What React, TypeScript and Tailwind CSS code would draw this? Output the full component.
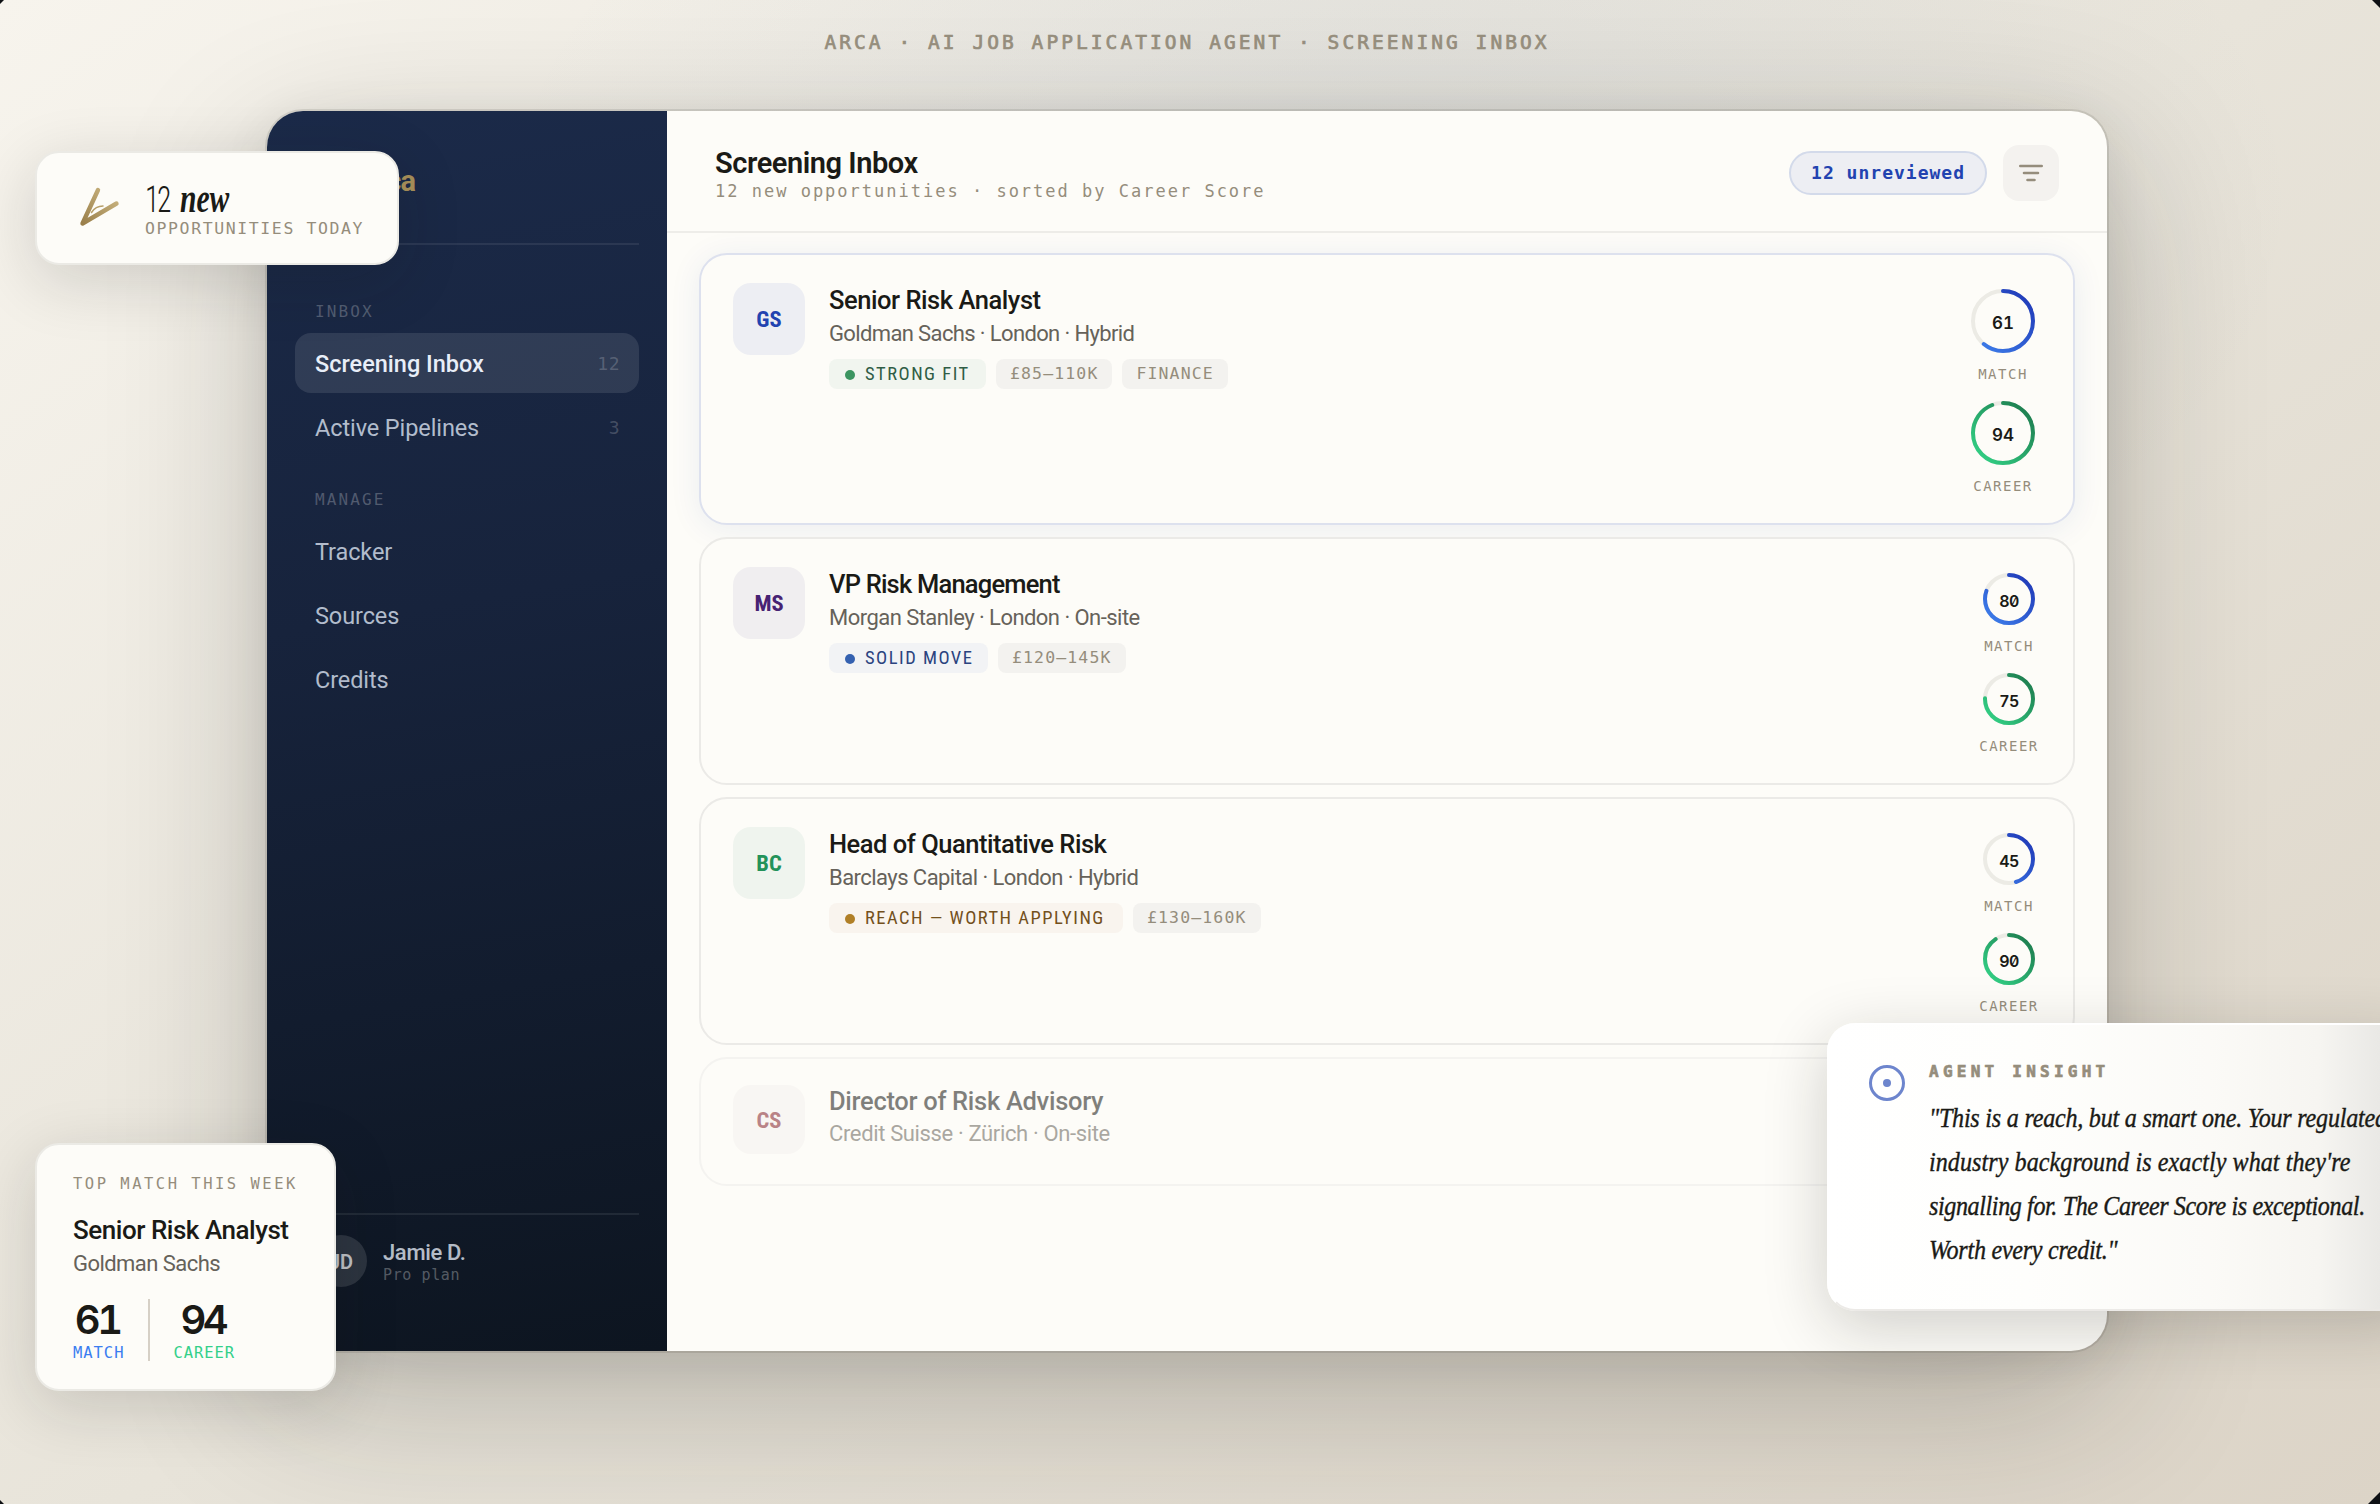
import React from 'react';

interface Job {
  initials: string;
  title: string;
  meta: string;
  fit?: string;
  tags: string[];
  match?: number;
  career?: number;
  large?: boolean;
  titleClass: string;
  metaClass: string;
  cardClass: string;
  avatarClass: string;
  fitClass: string;
  dotClass: string;
}

const MONO = "font-['DejaVu_Sans_Mono',monospace]";

const jobs: Job[] = [
  {
    initials: 'GS',
    title: 'Senior Risk Analyst',
    meta: 'Goldman Sachs · London · Hybrid',
    fit: 'STRONG FIT',
    tags: ['£85–110K', 'FINANCE'],
    match: 61,
    career: 94,
    large: true,
    titleClass: 'leading-[34px] tracking-[-0.45px]',
    metaClass: 'tracking-[-0.63px]',
    cardClass: 'h-[272px] border-[#dde1ee] pt-[28px] shadow-[0_4px_32px_rgba(30,60,150,0.08)]',
    avatarClass: 'h-[72px] bg-[#edeef3] text-[#2243b0]',
    fitClass: 'w-[157px] bg-[#f1f5ef] text-[#2f5d45]',
    dotClass: 'bg-[#3b9560]',
  },
  {
    initials: 'MS',
    title: 'VP Risk Management',
    meta: 'Morgan Stanley · London · On-site',
    fit: 'SOLID MOVE',
    tags: ['£120–145K'],
    match: 80,
    career: 75,
    titleClass: 'leading-[34px] tracking-[-0.8px]',
    metaClass: 'tracking-[-0.54px]',
    cardClass: 'h-[248px] border-[#ebeae7] pt-[28px]',
    avatarClass: 'h-[72px] bg-[#f0eef0] text-[#472273]',
    fitClass: 'w-[159px] bg-[#f2f3f5] text-[#2b437f]',
    dotClass: 'bg-[#3561b0]',
  },
  {
    initials: 'BC',
    title: 'Head of Quantitative Risk',
    meta: 'Barclays Capital · London · Hybrid',
    fit: 'REACH — WORTH APPLYING',
    tags: ['£130–160K'],
    match: 45,
    career: 90,
    titleClass: 'leading-[34px] tracking-[-0.48px]',
    metaClass: 'tracking-[-0.55px]',
    cardClass: 'h-[248px] border-[#ebeae7] pt-[28px]',
    avatarClass: 'h-[72px] bg-[#eff4ee] text-[#239259]',
    fitClass: 'w-[294px] bg-[#f9f4ee] text-[#73501c]',
    dotClass: 'bg-[#b07f27]',
  },
  {
    initials: 'CS',
    title: 'Director of Risk Advisory',
    meta: 'Credit Suisse · Zürich · On-site',
    tags: [],
    titleClass: 'leading-[32px] tracking-[-0.3px] opacity-55',
    metaClass: 'tracking-[-0.36px] opacity-55',
    cardClass: 'h-[129px] border-[#f4f3f0] pt-[26px]',
    avatarClass: 'h-[69px] bg-[#f8f6f3] text-[#b98386]',
    fitClass: '',
    dotClass: '',
  },
];

const ScoreRing: React.FC<{ value: number; label: string; kind: 'match' | 'career'; large?: boolean }> = ({
  value,
  label,
  kind,
  large,
}) => {
  const size = large ? 76 : 64;
  const r = large ? 30 : 24;
  const c = size / 2;
  const len = 2 * Math.PI * r;
  const id = `${kind}-${value}`;
  return (
    <div className="flex flex-col items-center">
      <svg width={size} height={size} viewBox={`0 0 ${size} ${size}`} className="block">
        <defs>
          <linearGradient id={id} x1="0" y1="0" x2="1" y2="1">
            <stop offset="0" stopColor={kind === 'match' ? '#3f82ee' : '#34d88a'} />
            <stop offset="1" stopColor={kind === 'match' ? '#1e35b4' : '#1c754a'} />
          </linearGradient>
        </defs>
        <circle cx={c} cy={c} r={r} fill="none" stroke="#ecebe5" strokeWidth="4" />
        <circle
          cx={c}
          cy={c}
          r={r}
          fill="none"
          stroke={`url(#${id})`}
          strokeWidth="4"
          strokeLinecap="round"
          strokeDasharray={`${(len * value) / 100} ${len}`}
          transform={`rotate(-90 ${c} ${c})`}
        />
        <text
          x={c}
          y={large ? c + 8 : c + 7.8}
          textAnchor="middle"
          fill="#1a1a16"
          className={`font-['Inter',sans-serif] font-semibold [font-feature-settings:'zero','tnum'] ${
            large ? 'text-[17px]' : 'text-[16px] tracking-[-0.5px]'
          }`}
        >
          {value}
        </text>
      </svg>
      <span className={`${MONO} mt-[7px] h-[17px] text-[14px] leading-[17px] tracking-[1.5px] text-[#958d7c]`}>{label}</span>
    </div>
  );
};

const JobCard: React.FC<{ job: Job }> = ({ job }) => (
  <div className={`flex shrink-0 items-start rounded-[28px] border-2 bg-[#fdfcf8] pr-[32px] pl-[32px] ${job.cardClass}`}>
    <div
      className={`flex w-[72px] shrink-0 items-center justify-center rounded-[18px] pt-[2px] text-[22.5px] font-bold [font-stretch:85%] ${job.avatarClass}`}
    >
      {job.initials}
    </div>
    <div className="ml-[24px] flex-1">
      <h3 className={`text-[25.5px] font-medium text-[#1a1a16] [font-stretch:90%] ${job.titleClass}`}>{job.title}</h3>
      <p className={`mt-px text-[22px] leading-[32px] font-[370] text-[#66625a] [font-stretch:90%] ${job.metaClass}`}>
        {job.meta}
      </p>
      {job.fit && (
        <div className="mt-[9px] flex gap-[10px]">
          <span
            className={`flex h-[30px] items-center rounded-[8px] pt-px pl-[16px] text-[18.5px] tracking-[1.5px] whitespace-nowrap [font-stretch:82%] ${job.fitClass}`}
          >
            <span className={`mr-[10px] h-[10px] w-[10px] rounded-full ${job.dotClass}`} />
            {job.fit}
          </span>
          {job.tags.map((tag) => (
            <span
              key={tag}
              className={`${MONO} h-[30px] rounded-[8px] bg-[#f3f2ef] px-[14px] text-[16.5px] leading-[29px] tracking-[1.12px] text-[#958d7c]`}
            >
              {tag}
            </span>
          ))}
        </div>
      )}
    </div>
    {job.match !== undefined && job.career !== undefined && (
      <div className="flex flex-col items-end gap-[12px]">
        <ScoreRing value={job.match} label="MATCH" kind="match" large={job.large} />
        <ScoreRing value={job.career} label="CAREER" kind="career" large={job.large} />
      </div>
    )}
  </div>
);

const NavItem: React.FC<{ label: string; count?: number; active?: boolean }> = ({ label, count, active }) => (
  <div
    className={`mb-1 flex h-[60px] items-center justify-between rounded-[16px] px-[20px] text-[23.5px] [font-stretch:90%] ${
      active ? 'bg-white/10 font-medium text-[#e8eef8]' : 'font-[370] tracking-[-0.1px] text-[#dfe7f5]/78'
    }`}
  >
    <span className="pt-[4px]">{label}</span>
    {count !== undefined && (
      <span className={`${MONO} -mr-px text-[18px] tracking-[0.5px] text-white/20`}>{count}</span>
    )}
  </div>
);

const NavLabel: React.FC<{ children: string }> = ({ children }) => (
  <div className={`${MONO} mb-[10px] h-[22px] pl-[20px] text-[16px] leading-[22px] tracking-[2.1px] text-white/25`}>
    {children}
  </div>
);

const Sidebar = () => (
  <aside className="flex w-[400px] shrink-0 flex-col bg-[linear-gradient(170deg,#1b2a49_0%,#17233c_40%,#0d1520_100%)] px-[28px]">
    <div className="flex h-[134px] items-center border-b-2 border-white/8 pt-[9px] pl-[20px]">
      <span className="w-[100px] text-right text-[29px] font-bold tracking-[-1px] text-[#a8905a] [font-stretch:95%]">Arca</span>
    </div>
    <nav className="mt-[56px]">
      <NavLabel>INBOX</NavLabel>
      <NavItem label="Screening Inbox" count={12} active />
      <NavItem label="Active Pipelines" count={3} />
      <div className="h-[28px]" />
      <NavLabel>MANAGE</NavLabel>
      <NavItem label="Tracker" />
      <NavItem label="Sources" />
      <NavItem label="Credits" />
    </nav>
    <div className="mt-auto mb-[64px] flex items-center border-t-2 border-white/8 pt-[20px] pl-[20px]">
      <div className="flex h-[52px] w-[52px] items-center justify-center rounded-full bg-white/12 pt-[2px] text-[20px] font-semibold text-white/70 [font-stretch:90%]">
        JD
      </div>
      <div className="ml-[16px] pt-[3px]">
        <div className="text-[22px] leading-[26px] font-medium tracking-[-0.35px] text-[#e3eaf5]/80 [font-stretch:90%]">
          Jamie D.
        </div>
        <div className={`${MONO} text-[15px] leading-[19px] tracking-[0.6px] text-white/30`}>Pro plan</div>
      </div>
    </div>
  </aside>
);

const OpportunitiesCard = () => (
  <div className="absolute top-[151px] left-[35px] flex h-[114px] w-[364px] items-center rounded-[24px] border-2 border-[#ebeae5] bg-[#fdfcf8] pl-[36px] shadow-[0_16px_64px_rgba(26,26,22,0.16)]">
    <svg width="56" height="56" viewBox="0 0 56 56" fill="none" strokeLinecap="round">
      <defs>
        <linearGradient id="mark" x1="0" y1="1" x2="1" y2="0">
          <stop offset="0" stopColor="#9a7f4a" />
          <stop offset="1" stopColor="#cdb884" />
        </linearGradient>
      </defs>
      <path d="M25 10 L9.5 43.5 L43.5 23.5" stroke="url(#mark)" strokeWidth="4.4" strokeLinejoin="round" />
      <path d="M18.5 32.5 Q22.5 26 30 26" stroke="#b7a06b" strokeWidth="1.5" />
    </svg>
    <div className="ml-[16px] pt-[1px]">
      <div className="flex h-[40px] items-baseline text-[#1a1a16]">
        <span className="w-[35px] origin-left scale-x-[0.8] text-[37px] leading-[42px] font-light tracking-[-3px] [font-stretch:75%]">
          12
        </span>
        <span className="origin-left scale-x-[0.74] font-['Liberation_Serif',serif] text-[40px] leading-[42px] font-bold italic">
          new
        </span>
      </div>
      <div className={`${MONO} text-[16.5px] leading-[22px] tracking-[1.6px] text-[#958d7c]`}>OPPORTUNITIES TODAY</div>
    </div>
  </div>
);

const TopMatchScore: React.FC<{ value: number; label: string; labelClass: string }> = ({ value, label, labelClass }) => (
  <div className="flex flex-col items-center">
    <span className="-ml-[3px] font-['Inter',sans-serif] text-[40px] leading-[42px] font-semibold tracking-[-3.5px] text-[#1a1a16] [font-feature-settings:'tnum']">
      {value}
    </span>
    <span className={`${MONO} text-[15.5px] leading-[24px] tracking-[0.95px] ${labelClass}`}>{label}</span>
  </div>
);

const TopMatchCard = () => (
  <div className="absolute top-[1143px] left-[35px] h-[248px] w-[301px] rounded-[24px] border-2 border-[#ebeae5] bg-[#fdfcf8] px-[36px] pt-[25px] shadow-[0_16px_64px_rgba(26,26,22,0.16)]">
    <div className={`${MONO} text-[15.5px] leading-[28px] tracking-[2.5px] whitespace-nowrap text-[#958d7c]`}>
      TOP MATCH THIS WEEK
    </div>
    <div className="mt-[14px] text-[26px] leading-[36px] font-medium tracking-[-0.47px] whitespace-nowrap text-[#1a1a16] [font-stretch:90%]">
      Senior Risk Analyst
    </div>
    <div className="mt-px text-[22px] leading-[30px] font-[370] tracking-[-0.55px] text-[#66625a] [font-stretch:90%]">
      Goldman Sachs
    </div>
    <div className="mt-[20px] flex">
      <TopMatchScore value={61} label="MATCH" labelClass="text-[#3b7df0]" />
      <div className="mr-[23px] ml-[24px] h-[62px] w-[2px] bg-[#d6d0c6]" />
      <TopMatchScore value={94} label="CAREER" labelClass="text-[#34d08a]" />
    </div>
  </div>
);

const InsightCard = () => (
  <div className="absolute top-[1023px] left-[1827px] flex h-[288px] w-[600px] rounded-[28px] border-2 border-t-white border-r-transparent border-b-[#eceae7] border-l-white bg-[linear-gradient(90deg,#ffffff_0px,#fefefc_200px,#fbfaf7_380px,#f6f5f1_490px,#e9e8e5_553px)] pl-[38px] shadow-[0_16px_64px_rgba(26,26,22,0.2)]">
    <svg width="40" height="40" viewBox="0 0 40 40" fill="none" className="mt-[38px] shrink-0">
      <circle cx="20" cy="20" r="16.5" stroke="#6d85cd" strokeWidth="3" />
      <circle cx="20" cy="20" r="4" fill="#6d85cd" />
    </svg>
    <div className="ml-[22px] w-[480px] shrink-0 pt-[33px]">
      <div
        className={`${MONO} text-[16px] leading-[28px] font-bold tracking-[4.25px] text-[#958d7c] [-webkit-text-stroke:0.7px_#958d7c]`}
      >
        AGENT INSIGHT
      </div>
      <p className="mt-[10px] origin-left scale-x-[0.86] font-['Liberation_Serif',serif] text-[28px] leading-[44px] whitespace-nowrap text-[#1a1a16] italic [-webkit-text-stroke:0.4px_#1a1a16]">
        <span className="block tracking-[-0.25px]">"This is a reach, but a smart one. Your regulated</span>
        <span className="block tracking-[0.08px]">industry background is exactly what they're</span>
        <span className="block tracking-[-0.45px]">signalling for. The Career Score is exceptional.</span>
        <span className="block tracking-[-0.3px]">Worth every credit."</span>
      </p>
    </div>
  </div>
);

export default function App() {
  return (
    <div className="h-[1504px] w-full overflow-hidden bg-[#0e1014] font-['Roboto',sans-serif]">
      <div className="relative h-full w-full overflow-hidden bg-[radial-gradient(ellipse_900px_500px_at_1400px_200px,rgba(90,120,160,0.1),transparent),linear-gradient(145deg,#f7f4ed_0%,#e8e4da_50%,#dcd4c7_100%)] [clip-path:polygon(4px_0,2372px_0,2380px_8px,2380px_1492px,2368px_1504px,4px_1504px,0_1500px,0_4px)]">
        <div className="ml-[267px] w-[1840px]">
          <div
            className={`${MONO} pt-[29px] text-center text-[19.5px] leading-[28px] tracking-[3.06px] text-[#958d7c] [-webkit-text-stroke:0.7px_#958d7c]`}
          >
            ARCA · AI JOB APPLICATION AGENT · SCREENING INBOX
          </div>
          <div className="mt-[54px] flex h-[1240px] overflow-hidden rounded-[36px] bg-[#fdfcf8] shadow-[0_0_0_2px_rgba(26,26,22,0.1),0_48px_160px_rgba(26,26,22,0.24),0_8px_48px_rgba(26,26,22,0.08)]">
            <Sidebar />
            <main className="flex flex-1 flex-col">
              <header className="flex h-[122px] items-start justify-between border-b-2 border-[#eeede9] pr-[48px] pl-[48px]">
                <div className="pt-[34px]">
                  <h1 className="text-[29px] leading-[36px] font-semibold tracking-[-0.45px] text-[#1a1a16] [font-stretch:90%]">
                    Screening Inbox
                  </h1>
                  <p className={`${MONO} text-[17px] leading-[20px] tracking-[2px] text-[#958d7c]`}>
                    12 new opportunities · sorted by Career Score
                  </p>
                </div>
                <div className="flex items-center gap-[16px] pt-[34px]">
                  <span
                    className={`${MONO} h-[44px] rounded-full border-2 border-[#d3daea] bg-[#edeef3] px-[20px] text-[18px] leading-[40px] font-bold tracking-[1px] text-[#2243b0]`}
                  >
                    12 unreviewed
                  </span>
                  <button className="flex h-[56px] w-[56px] items-center justify-center rounded-[16px] bg-[#f4f2ef]">
                    <svg width="28" height="28" viewBox="0 0 28 28" stroke="#958d7c" strokeWidth="2.6" strokeLinecap="round">
                      <path d="M3.3 7 H24.7 M7 14 H21 M10.5 21 H17.5" />
                    </svg>
                  </button>
                </div>
              </header>
              <div className="flex flex-col gap-[12px] px-[32px] pt-[20px]">
                {jobs.map((job) => (
                  <JobCard key={job.initials} job={job} />
                ))}
              </div>
            </main>
          </div>
        </div>
        <OpportunitiesCard />
        <TopMatchCard />
        <InsightCard />
      </div>
    </div>
  );
}
